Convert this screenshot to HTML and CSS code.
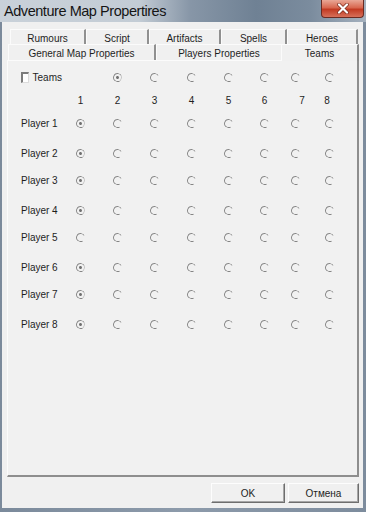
FILE: index.html
```html
<!DOCTYPE html>
<html lang="en">
<head>
    <meta charset="UTF-8">
    <title>Adventure Map Propertires</title>
    <link rel="stylesheet" href="styles.css">
</head>
<body>
    <div class="window">
        <div class="titlebar">
            <span class="title">Adventure Map Propertires</span>
            <div class="close">
                <svg width="14" height="11" viewBox="0 0 14 11">
                    <path d="M3 1.5 L11 9.5 M11 1.5 L3 9.5" stroke="#7a2a1c" stroke-width="3.6" stroke-linecap="round"/>
                    <path d="M3 1.5 L11 9.5 M11 1.5 L3 9.5" stroke="#fff" stroke-width="2.2" stroke-linecap="round"/>
                </svg>
            </div>
        </div>
        <div class="client">
            <div class="tab-row back">
                <div class="tab" style="width: 76px">Rumours</div>
                <div class="tab" style="width: 63px">Script</div>
                <div class="tab" style="width: 72px">Artifacts</div>
                <div class="tab" style="width: 66px">Spells</div>
                <div class="tab" style="width: 71px">Heroes</div>
            </div>
            <div class="tab-row front">
                <div class="tab" style="width: 148px">General Map Properties</div>
                <div class="tab plain" style="width: 125px">Players Properties</div>
                <div class="tab selected">Teams</div>
            </div>

            <div class="panel">
                <div class="team-grid">
                    <div class="cell label"><span class="checkbox"></span>Teams</div>
                    <div class="cell"></div>
                    <div class="cell"><span class="radio checked"></span></div>
                    <div class="cell"><span class="radio"></span></div>
                    <div class="cell"><span class="radio"></span></div>
                    <div class="cell"><span class="radio"></span></div>
                    <div class="cell"><span class="radio"></span></div>
                    <div class="cell"><span class="radio"></span></div>
                    <div class="cell"><span class="radio"></span></div>

                    <div class="cell"></div>
                    <div class="cell">1</div>
                    <div class="cell">2</div>
                    <div class="cell">3</div>
                    <div class="cell">4</div>
                    <div class="cell">5</div>
                    <div class="cell">6</div>
                    <div class="cell num-7">7</div>
                    <div class="cell num-8">8</div>
                </div>
            </div>

            <div class="buttons">
                <div class="button ok">OK</div>
                <div class="button">Отмена</div>
            </div>
        </div>
    </div>

    <script>
        // строки игроков: у всех, кроме 5-го, выбрана команда 1
        var grid = document.querySelector('.team-grid');
        var picks = [1, 1, 1, 1, 0, 1, 1, 1];
        picks.forEach(function(pick, i) {
            var html = '<div class="cell label">Player ' + (i + 1) + '</div>';
            for (var c = 1; c <= 8; c++) {
                html += '<div class="cell"><span class="radio' + (c === pick ? ' checked' : '') + '"></span></div>';
            }
            grid.insertAdjacentHTML('beforeend', html);
        });
    </script>
</body>
</html>
```

FILE: styles.css
```css
body {
    margin: 0;
    font-family: "Liberation Sans", Arial, sans-serif;
    font-size: 10px;
    color: #1e1e1e;
}
.window {
    width: 366px;
    height: 512px;
    display: flex;
    flex-direction: column;
    background: linear-gradient(90deg, #7b8a9b 0%, #8d9bab 50%, #7d8c9d 100%);
}
.titlebar {
    height: 22px;
    display: flex;
    justify-content: space-between;
    align-items: flex-start;
    padding-left: 4px;
    background: linear-gradient(90deg, #c9d1d9 0%, #c3ccd5 38%, #8796a7 52%, #6f8194 70%, #7b8c9e 85%, #a5b1be 100%);
}
.title {
    font-size: 14.5px;
    line-height: 22px;
    letter-spacing: -0.45px;
    color: #151515;
}
.close {
    width: 41px;
    height: 17px;
    margin-right: 2px;
    display: flex;
    align-items: center;
    justify-content: center;
    border: 1px solid #6b2b22;
    border-top: none;
    border-radius: 0 0 4px 4px;
    background: linear-gradient(#e9a796 0%, #d8674f 45%, #c23a22 55%, #d7705a 100%);
}
.client {
    flex: 1;
    display: flex;
    flex-direction: column;
    margin: 0 3px 4px 2px;
    padding: 7px 4px 5px 5px;
    background: #f0f0f0;
}
.tab-row {
    display: flex;
}
.tab-row.back {
    height: 15px;
    margin-left: 3px;
}
.tab-row.front {
    height: 16px;
    margin-left: 1px;
}
.tab {
    box-sizing: border-box;
    display: flex;
    justify-content: center;
    align-items: center;
    border-top: 1px solid #fbfbfb;
    border-left: 1px solid #fbfbfb;
    border-right: 2px solid #909090;
}
.back .tab {
    padding-top: 3px;
}
.front .tab {
    padding-top: 2px;
}
.tab.plain {
    border-right: none;
}
.tab.selected {
    flex: 1;
    margin-bottom: -1px;
    padding-top: 1px;
    position: relative;
    z-index: 1;
    background: #f0f0f0;
    border-right-color: #8a8a8a;
}
.panel {
    flex: 1;
    border-top: 1px solid #fbfbfb;
    border-left: 1px solid #fbfbfb;
    border-right: 2px solid #8e8e8e;
    border-bottom: 2px solid #8e8e8e;
    background: #f1f1f1;
    padding: 10px 0 0 13px;
}
.team-grid {
    display: grid;
    grid-template-columns: 41px repeat(5, 37px) 35px 26px 42px;
    grid-template-rows: 23px 23px 30px 27px 30px 27px 30px 27px 30px 20px;
    align-items: start;
}
.cell {
    height: 12px;
    display: flex;
    align-items: center;
    justify-content: center;
    white-space: nowrap;
}
.cell.label {
    justify-content: flex-start;
}
.cell.num-7 {
    padding-left: 14px;
}
.cell.num-8 {
    padding-right: 4px;
}
.checkbox {
    box-sizing: border-box;
    width: 11px;
    height: 11px;
    margin-right: 4px;
    background: #fff;
    border: 1px solid #dcdcdc;
    border-top: 2px solid #7c7c7c;
    border-left: 2px solid #7c7c7c;
}
.radio {
    box-sizing: border-box;
    position: relative;
    width: 9px;
    height: 9px;
    border: 1.5px solid #858585;
    border-right-color: transparent;
    border-radius: 50%;
    transform: rotate(15deg);
}
.radio.checked {
    border-right-color: #c4c4c4;
}
.radio.checked::after {
    content: "";
    position: absolute;
    left: 1.5px;
    top: 1.5px;
    width: 3px;
    height: 3px;
    border-radius: 50%;
    background: #707070;
}
.buttons {
    display: flex;
    justify-content: flex-end;
    gap: 3px;
    margin-top: 6px;
}
.button {
    box-sizing: border-box;
    width: 71px;
    height: 20px;
    display: flex;
    align-items: center;
    justify-content: center;
    background: #f0f0f0;
    border: 1px solid;
    border-color: #fdfdfd #6e6e6e #6e6e6e #fdfdfd;
    box-shadow: inset -1px -1px #a6a6a6;
}
.button.ok {
    width: 74px;
}
```
